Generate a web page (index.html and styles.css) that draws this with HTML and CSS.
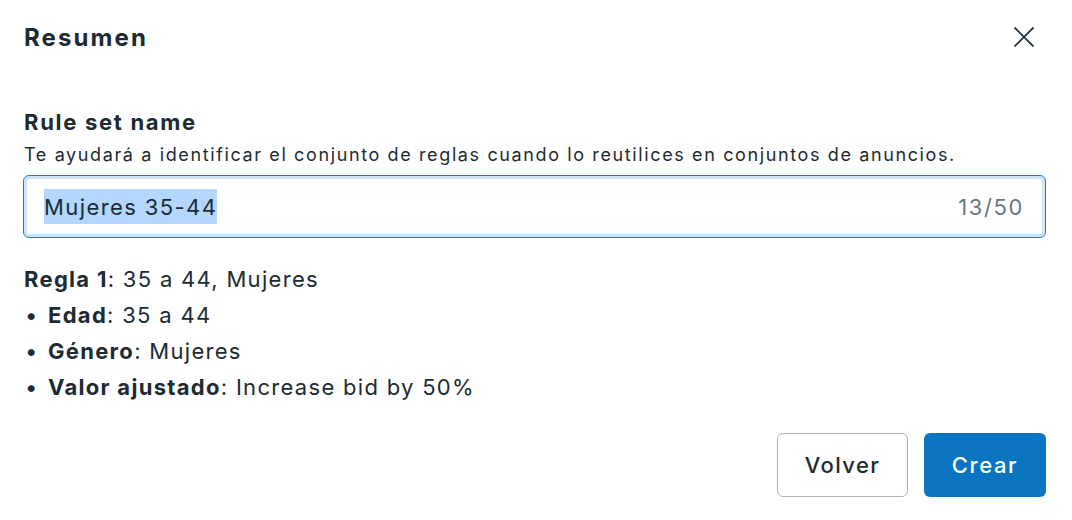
FILE: index.html
```html
<!DOCTYPE html>
<html lang="es">
<head>
    <meta charset="UTF-8">
    <meta name="viewport" content="width=device-width, initial-scale=1.0">
    <title>Resumen</title>
    <link rel="stylesheet" href="styles.css">
</head>
<body>
    <section class="modal">
        <header class="modal_head">
            <h2>Resumen</h2>
            <button class="close" aria-label="Cerrar">
                <svg width="22" height="22" viewBox="0 0 22 22"><path d="M1.5 1.5L20.5 20.5M20.5 1.5L1.5 20.5" stroke="#2a3843" stroke-width="1.8" fill="none"/></svg>
            </button>
        </header>
        <div class="field">
            <h3>Rule set name</h3>
            <p class="help">Te ayudará a identificar el conjunto de reglas cuando lo reutilices en conjuntos de anuncios.</p>
            <div class="input">
                <span class="value"><span class="sel">Mujeres 35-44</span></span>
                <span class="count">13/50</span>
            </div>
        </div>
        <div class="rules">
            <p><b>Regla 1</b>: 35 a 44, Mujeres</p>
            <ul>
                <li><b>Edad</b>: 35 a 44</li>
                <li><b>Género</b>: Mujeres</li>
                <li><b>Valor ajustado</b>: Increase bid by 50%</li>
            </ul>
        </div>
        <footer class="actions">
            <button class="btn back">Volver</button>
            <button class="btn create">Crear</button>
        </footer>
    </section>
</body>
</html>
```

FILE: styles.css
```css
body,html{width: 100%; height: 100%; overflow: hidden;}
body,h2,h3,p,ul,button{margin: 0; padding: 0;}
body{background:#fff; color:#1c2b33; font-family: Inter, "Noto Sans", sans-serif;}
button{border:none; background-color:transparent; cursor: pointer; font-family: inherit;}

.modal{padding: 0 27px 0 23px;}
.modal_head{display: flex; justify-content: space-between; align-items: center; height: 74px;}
.modal_head>h2{font-size: 24px; font-weight: 700; padding-left: 1px; letter-spacing: 2.1px;}
.modal_head>.close{width: 22px; height: 22px; margin-right: 10px; display: flex;}

.field{padding-top: 34px;}
.field>h3{font-size: 22px; font-weight: 700; line-height: 28px; padding-left: 1px; letter-spacing: 1.7px;}
.field>.help{font-size: 18px; line-height: 28px; margin-top: 5px; padding-left: 1px; letter-spacing: 1.62px;}
.input{
    display: flex; justify-content: space-between; align-items: center;
    height: 63px; box-sizing: border-box; margin-top: 6px; margin-right: -1px;
    border: 1px solid #1a7bc9; border-radius: 6px; box-shadow: inset 0 0 0 3px #d2e4f5;
    padding: 0 21px 0 20px; font-size: 22px; letter-spacing: 1.4px;
}
.input .sel{background:#b3d7ff; padding: 5px 0 4px 0; line-height: 26px;}
.input .count{color:#6b7780; letter-spacing: 1.6px;}

.rules{padding-top: 23px; font-size: 22px; line-height: 36px; padding-left: 1px; letter-spacing: 1.3px;}
.rules b{font-weight: 650;}
.rules ul{list-style: none;}
.rules li::before{content: "\2022"; display: inline-block; width: 23px; padding-left: 1px;}

.actions{display: flex; justify-content: flex-end; gap: 16px; padding-top: 28px; margin-right: -1px;}
.btn{height: 64px; border-radius: 6px; font-size: 22px; font-weight: 500; letter-spacing: 1.4px;}
.back{width: 131px; border: 1px solid #a9b4bf; color:#1c2b33; background:#fff;}
.create{width: 122px; background:#0a74c0; color:#fff; letter-spacing: 1.6px;}
```
